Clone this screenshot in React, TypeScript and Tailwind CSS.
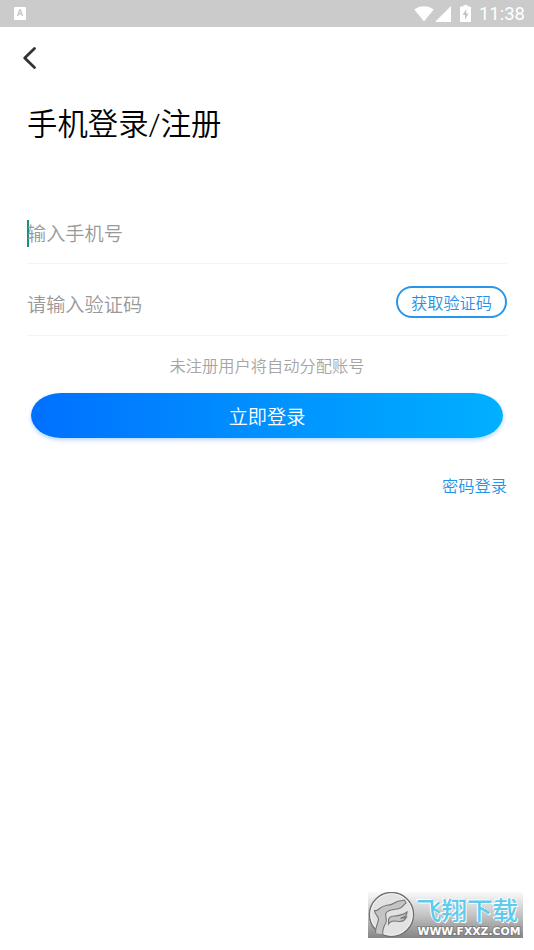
import React from 'react';

const StatusBar: React.FC = () => {
  return (
    <div className="flex h-[27px] items-center justify-between bg-[#cbcbcb] pl-[14px] pr-[9px] text-white">
      <div className="flex h-[13px] w-[12px] items-center justify-center rounded-[1px] bg-white font-['Roboto',sans-serif] text-[9px] font-bold leading-none text-[#c6c6c6]">
        A
      </div>

      <div className="flex h-full items-center">
        {/* Wifi */}
        <svg className="h-[16px] w-[20px]" viewBox="0 0 20 16" fill="currentColor">
          <path d="M0.3 3.6C5.8 -1 14.2 -1 19.7 3.6L10 15.6Z" />
        </svg>
        {/* Signal */}
        <svg className="ml-[1px] h-[16px] w-[16px]" viewBox="0 0 16 16" fill="currentColor">
          <path d="M0 16L16 0V16Z" />
        </svg>
        {/* Battery */}
        <svg className="ml-[9px] h-[17px] w-[11px]" viewBox="0 0 11 17" fill="currentColor">
          <path d="M3.4 0H7.6V1.6H10Q11 1.6 11 2.6V16Q11 17 10 17H1Q0 17 0 16V2.6Q0 1.6 1 1.6H3.4Z" />
          <path d="M6.3 4L2.6 10H5V14.6L8.6 8.4H6.3Z" fill="#c2c2c2" />
        </svg>
        <span className="ml-[8px] mt-[1px] font-['Roboto',sans-serif] text-[18.5px] leading-none">11:38</span>
      </div>
    </div>
  );
};

const Watermark: React.FC = () => {
  return (
    <div className="absolute left-[368px] top-[892px] flex h-[46px] w-[155px] bg-linear-to-b from-[#fafafa] via-[#c4c4c4] to-[#858585]">
      <svg className="h-[46px] w-[48px] shrink-0" viewBox="0 0 48 46" fill="none">
        <circle cx="23.5" cy="22.5" r="22" fill="#e2e2e2" stroke="#707070" strokeWidth="1.4" />
        <circle cx="23.5" cy="22.5" r="20.7" stroke="#f5f5f5" strokeWidth="1" />
        {/* Upper wing running down into the tail */}
        <path
          d="M7.5 41C7 35 10.5 31 10.5 27C10.5 24 6.8 22.5 6.5 18.5C10.5 20 11 14 19 13.3C25 13 27 10 30 9.2L36.5 8L38 11C35.5 12.5 34.5 16 30.5 16.8C25 18 20.5 17 18 21C16.5 24.5 19.5 27 18 30.5C16 34 14 37 14.8 42.5"
          fill="#c4c4c4"
          stroke="#777"
          strokeWidth="1.1"
        />
        {/* Lower wing */}
        <path
          d="M20.5 32C20.5 28 20 25.5 24 24.3C29 23.8 35 23.5 39 20C39.3 23.5 36.5 25.2 32.5 26.2C35 26.5 37 26 38.5 25C37 29 33.5 30 29 29.2C25 28.5 22 29.5 20.5 32Z"
          fill="#c4c4c4"
          stroke="#777"
          strokeWidth="1.1"
        />
      </svg>
      <div className="mt-[5px] flex flex-col">
        <span className="h-[26px] whitespace-nowrap text-[25.5px] font-medium leading-[23px] text-[#5ccbee] [text-shadow:0_0_1px_#fff,1px_1px_0_#fff,-1px_-1px_0_#fff]">
          飞翔下载
        </span>
        <svg className="h-[14px] w-[107px]" viewBox="0 0 107 14">
          <text
            x="1.5"
            y="11.5"
            textLength="103"
            lengthAdjust="spacingAndGlyphs"
            fill="#fff"
            stroke="#777"
            strokeWidth="1.6"
            paintOrder="stroke"
            className="font-['DejaVu_Sans',sans-serif] text-[10.5px] font-bold"
          >
            WWW.FXXZ.COM
          </text>
        </svg>
      </div>
    </div>
  );
};

const App: React.FC = () => {
  return (
    <div className="relative h-[950px] w-[534px] overflow-hidden bg-white font-['Noto_Sans_CJK_SC',sans-serif]">
      <StatusBar />

      {/* Back */}
      <header className="flex h-[62px] items-center pl-[22px]">
        <button aria-label="返回">
          <svg className="h-[24px] w-[16px]" viewBox="0 0 16 24" fill="none">
            <path
              d="M12.5 2.5L2.7 12L12.5 21.5"
              stroke="#333"
              strokeWidth="2.8"
              strokeLinecap="round"
              strokeLinejoin="round"
            />
          </svg>
        </button>
      </header>

      <main className="flex flex-col px-[27px] font-[350]">
        <h1 className="mt-[13px] h-[46px] font-['Roboto','Noto_Sans_CJK_SC',sans-serif] text-[30.4px] leading-[46px] text-black">
          手机登录/注册
        </h1>

        {/* Phone number */}
        <div className="mt-[55px] flex h-[61px] items-center border-b border-[#f4f4f4]">
          <span className="h-[27px] w-[2px] bg-[#16907f]" />
          <span className="-ml-[2px] text-[19.2px] leading-[28px] text-[#999]">输入手机号</span>
        </div>

        {/* Verification code */}
        <div className="flex h-[72px] items-start justify-between border-b border-[#f4f4f4]">
          <span className="mt-[26px] text-[19.2px] leading-[28px] text-[#999]">请输入验证码</span>
          <button className="mt-[22px] flex h-[32px] w-[111px] items-center justify-center rounded-full border-2 border-[#2a96ea] text-[16.2px] leading-none text-[#2492e8]">
            获取验证码
          </button>
        </div>

        <p className="mt-[16px] h-[26px] text-center text-[16.25px] leading-[26px] text-[#a5a5a5]">未注册用户将自动分配账号</p>

        <button className="mx-[4px] mt-[15px] h-[45px] rounded-[30px/22.5px] bg-linear-to-r from-[#0070ff] to-[#00b0ff] text-[19.2px] leading-[46px] text-white shadow-[0_2px_4px_rgba(0,120,255,0.3)]">
          立即登录
        </button>

        <a href="#password" className="mt-[34px] self-end text-[16.25px] leading-[26px] text-[#2095ea]">
          密码登录
        </a>
      </main>

      <Watermark />
    </div>
  );
};

export default App;
